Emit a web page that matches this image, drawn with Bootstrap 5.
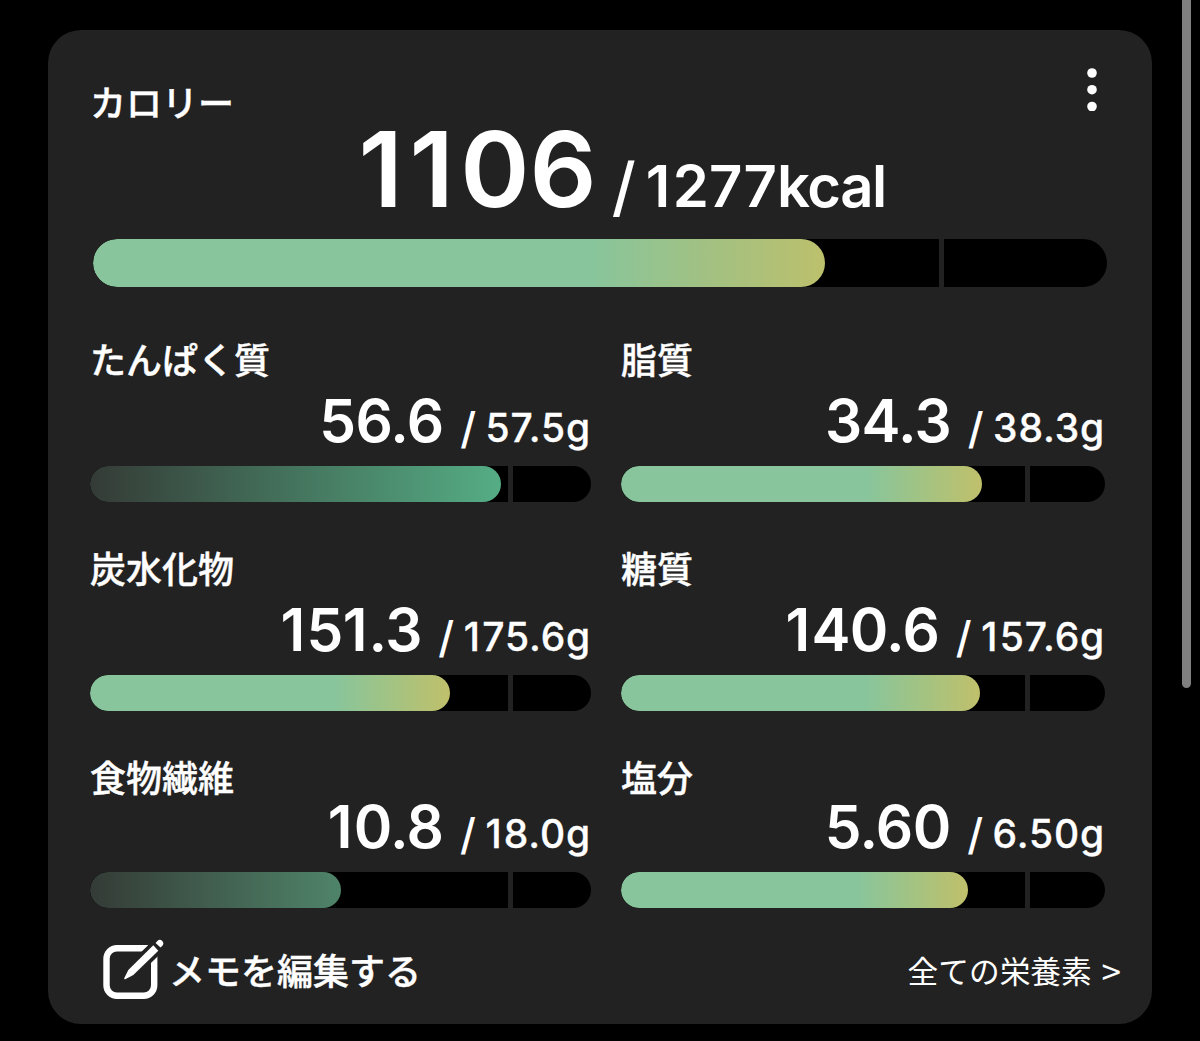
<!DOCTYPE html>
<html lang="ja" data-bs-theme="dark">
<head>
<meta charset="utf-8">
<meta name="viewport" content="width=device-width, initial-scale=1">
<title>カロリー</title>
<link rel="stylesheet" href="https://cdn.jsdelivr.net/npm/bootstrap@5.3.0/dist/css/bootstrap.min.css">
<style>
body{background:#000;color:#fff;font-family:Inter,"Noto Sans CJK JP",sans-serif;height:1041px;overflow:hidden}
.page-scroll{position:absolute;right:9px;top:-10px;width:9px;height:698px;border-radius:5px;background:#808080}
.panel{width:1104px;height:994px;margin:30px 0 0 48px;padding:51px 43px 0 42px;border-radius:33px;background:#222}
.panel-head{height:41px}
.label-text{font-family:"Noto Sans CJK JP",sans-serif;font-size:36px;line-height:40px;font-weight:500;white-space:nowrap;-webkit-text-stroke:.4px #fff}
.more{width:12px;height:44px;margin:-14px 11px 0 0}
.total{margin-top:-6px;margin-bottom:18px;padding-left:268.5px;height:105px;font-weight:600;white-space:nowrap}
.total .now{font-size:105px;line-height:105px}
.total .now .n1{letter-spacing:6.5px}
.total .goal{font-size:58px;line-height:60px}
.total .goal .n1{letter-spacing:2.5px}
.total .goal .unit{letter-spacing:-1.4px}
.total .sep{font-size:65px;line-height:56px;font-weight:500;margin:0 10px 0 15px;transform:translateY(3px)}
.meter{height:36px;border-radius:18px;background:#000;position:relative;overflow:hidden}
.meter .fill{height:100%;border-radius:18px;background:linear-gradient(90deg,#88c59c 0 68%,#a3c382 84%,#c0c06b)}
.meter .tick{position:absolute;top:0;bottom:0;width:5.5px;background:#222}
.meter.main{height:48px;border-radius:24px;margin:0 2px 0 3px}
.meter.main .fill{border-radius:24px;background:linear-gradient(90deg,#88c59c 0 68%,#a2c182 84%,#bcc06c)}
.meter .fill.soft{background:linear-gradient(90deg,#343b36,#55ad85)}
.meter .fill.soft.low{background:linear-gradient(90deg,#343b36,#4f8469)}
.nutrients{display:grid;grid-template-columns:501px 484px;column-gap:30px;margin:51px 0 0 0}
.cell{height:209px}
.cell.last{height:197px}
.amount{height:60px;margin:12.5px 0 15.5px;font-weight:600;white-space:nowrap}
.last .amount{margin-top:.5px}
.amount .now{font-size:58.5px;line-height:60px;letter-spacing:-.6px}
.amount .now .n1{letter-spacing:1.2px}
.amount .sep{font-size:43px;line-height:40px;font-weight:500;margin:0 9.5px 0 16.5px;transform:translateY(2px)}
.amount .goal{font-size:39px;line-height:40px;font-weight:500;letter-spacing:.9px;margin-right:-.2px;-webkit-text-stroke:.3px #fff}
.amount .goal .n1{letter-spacing:2.2px}
.foot{margin-top:-16px}
.edit-icon{width:64px;height:64px;margin-left:12px}
.edit-text{margin-left:3px}
.all-link{font-family:"Noto Sans CJK JP",sans-serif;font-size:30.7px;line-height:40px;font-weight:400;margin:2px -12px 0 0;white-space:nowrap}
.all-link .arrow{display:inline-block;font-size:35px;line-height:36px;margin-left:3px;transform:translateY(2px)}
</style>
<script src="https://cdn.jsdelivr.net/npm/bootstrap@5.3.0/dist/js/bootstrap.bundle.min.js"></script>
</head>
<body class="position-relative">
<main class="panel">
  <div class="panel-head d-flex justify-content-between align-items-start">
    <div class="label-text">カロリー</div>
    <svg class="more" viewBox="0 0 12 44" fill="#fff"><circle cx="6" cy="6" r="4.8"/><circle cx="6" cy="22.7" r="4.8"/><circle cx="6" cy="39.5" r="4.8"/></svg>
  </div>
  <div class="total d-flex align-items-baseline"><span class="now"><span class="n1">11</span>06</span><span class="sep">/</span><span class="goal"><span class="n1">1</span>277<span class="unit">kcal</span></span></div>
  <div class="meter main"><div class="fill" style="width:72.2%"></div><span class="tick" style="left:83.4%"></span></div>

  <section class="nutrients">
    <div class="cell"><div class="label-text">たんぱく質</div>
      <div class="amount d-flex justify-content-end align-items-baseline"><span class="now">56.6</span><span class="sep">/</span><span class="goal">57.5g</span></div>
      <div class="meter"><div class="fill soft" style="width:82%"></div><span class="tick" style="left:83.4%"></span></div></div>
    <div class="cell"><div class="label-text">脂質</div>
      <div class="amount d-flex justify-content-end align-items-baseline"><span class="now">34.3</span><span class="sep">/</span><span class="goal">38.3g</span></div>
      <div class="meter"><div class="fill" style="width:74.6%"></div><span class="tick" style="left:83.4%"></span></div></div>
    <div class="cell"><div class="label-text">炭水化物</div>
      <div class="amount d-flex justify-content-end align-items-baseline"><span class="now"><span class="n1">1</span>5<span class="n1">1</span>.3</span><span class="sep">/</span><span class="goal"><span class="n1">1</span>75.6g</span></div>
      <div class="meter"><div class="fill" style="width:71.9%"></div><span class="tick" style="left:83.4%"></span></div></div>
    <div class="cell"><div class="label-text">糖質</div>
      <div class="amount d-flex justify-content-end align-items-baseline"><span class="now"><span class="n1">1</span>40.6</span><span class="sep">/</span><span class="goal"><span class="n1">1</span>57.6g</span></div>
      <div class="meter"><div class="fill" style="width:74.2%"></div><span class="tick" style="left:83.4%"></span></div></div>
    <div class="cell last"><div class="label-text">食物繊維</div>
      <div class="amount d-flex justify-content-end align-items-baseline"><span class="now"><span class="n1">1</span>0.8</span><span class="sep">/</span><span class="goal"><span class="n1">1</span>8.0g</span></div>
      <div class="meter"><div class="fill soft low" style="width:50%"></div><span class="tick" style="left:83.4%"></span></div></div>
    <div class="cell last"><div class="label-text">塩分</div>
      <div class="amount d-flex justify-content-end align-items-baseline"><span class="now">5.60</span><span class="sep">/</span><span class="goal">6.50g</span></div>
      <div class="meter"><div class="fill" style="width:71.7%"></div><span class="tick" style="left:83.4%"></span></div></div>
  </section>

  <div class="foot d-flex justify-content-between align-items-center">
    <div class="d-flex align-items-center">
      <svg class="edit-icon" viewBox="0 0 64 64">
        <path d="M46 11.200H15A10.500 10.500 0 0 0 4.500 21.700V48.300A10.500 10.500 0 0 0 15 58.800H41.700A10.500 10.500 0 0 0 52.200 48.300V17" fill="none" stroke="#fff" stroke-width="6.400"/>
        <path d="M51.300 8.300L56.300 13.700L31.300 38L23.300 42.200Q21.700 42.600 22.300 41L26.300 33Z" fill="#fff" stroke="#222" stroke-width="7.500" paint-order="stroke"/>
        <path d="M53.600 5.900L55.400 3.900Q57.800 1.800 60.300 4Q62.400 6.500 60.400 8.700L58.500 10.600Z" fill="#fff"/>
      </svg>
      <span class="label-text edit-text">メモを編集する</span>
    </div>
    <span class="all-link">全ての栄養素 <span class="arrow">&gt;</span></span>
  </div>
</main>
<div class="page-scroll"></div>
</body>
</html>
